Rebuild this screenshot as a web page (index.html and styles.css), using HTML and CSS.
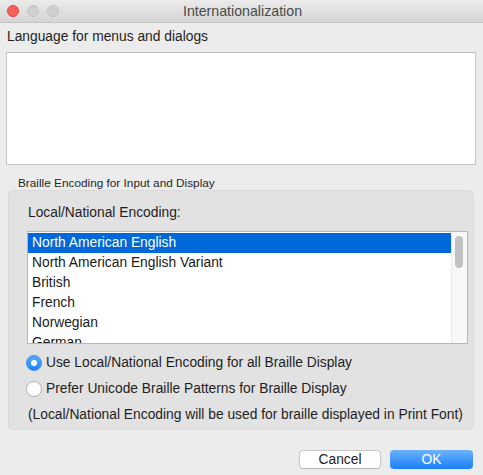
FILE: index.html
```html
<!DOCTYPE html>
<html>
<head>
<meta charset="utf-8">
<link rel="stylesheet" href="styles.css">
</head>
<body>
<div class="window">
  <div class="titlebar">
    <div class="lights">
      <span class="light red"></span>
      <span class="light gray"></span>
      <span class="light gray"></span>
    </div>
    <div class="title">Internationalization</div>
  </div>
  <div class="content">
    <div class="lang-label">Language for menus and dialogs</div>
    <div class="lang-box"></div>
    <div class="group-label">Braille Encoding for Input and Display</div>
    <div class="group">
      <div class="enc-label">Local/National Encoding:</div>
      <div class="list">
        <div class="rows">
          <div class="row selected">North American English</div>
          <div class="row">North American English Variant</div>
          <div class="row">British</div>
          <div class="row">French</div>
          <div class="row">Norwegian</div>
          <div class="row">German</div>
        </div>
        <div class="scroll"><div class="thumb"></div></div>
      </div>
      <div class="radio-row"><span class="radio on"></span><span>Use Local/National Encoding for all Braille Display</span></div>
      <div class="radio-row"><span class="radio"></span><span>Prefer Unicode Braille Patterns for Braille Display</span></div>
      <div class="note">(Local/National Encoding will be used for braille displayed in Print Font)</div>
    </div>
    <div class="buttons">
      <div class="btn cancel">Cancel</div>
      <div class="btn ok">OK</div>
    </div>
  </div>
</div>
</body>
</html>
```
FILE: styles.css
```css
html, body {
  margin: 0;
  padding: 0;
}
body {
  width: 483px;
  height: 475px;
  overflow: hidden;
  background: #ececec;
  font-family: "Liberation Sans", Arial, sans-serif;
  font-size: 13.8px;
  color: #1e1e1e;
}
.window {
  width: 483px;
  height: 475px;
  display: flex;
  flex-direction: column;
}
.titlebar {
  height: 22px;
  border-bottom: 1px solid #c4c4c4;
  background: linear-gradient(#ebebeb, #d5d5d5);
  display: flex;
  align-items: center;
  position: relative;
}
.lights {
  display: flex;
  gap: 8px;
  padding-left: 7px;
  position: relative;
  z-index: 1;
}
.light {
  width: 12px;
  height: 12px;
  border-radius: 50%;
  box-sizing: border-box;
}
.light.red {
  background: #fc5f57;
  border: 1px solid #e2463f;
}
.light.gray {
  background: #d0d0d0;
  border: 1px solid #c2c2c2;
}
.title {
  position: absolute;
  left: 0;
  right: 0;
  top: 0;
  line-height: 22px;
  text-align: center;
  color: #4a4a4a;
  font-size: 14.2px;
  padding-left: 2px;
}
.content {
  display: flex;
  flex-direction: column;
}
.lang-label {
  padding: 6px 0 0 7px;
  height: 16px;
  line-height: 16px;
}
.lang-box {
  margin: 7px 0 0 6px;
  width: 468px;
  height: 111px;
  background: #fff;
  border: 1px solid #c6c6c6;
  border-top-color: #bcbcbc;
}
.group-label {
  font-size: 11.8px;
  padding: 11px 0 0 18px;
  height: 14px;
  line-height: 14px;
  color: #262626;
}
.group {
  margin: 0 0 0 8px;
  width: 464px;
  height: 238px;
  background: #e2e2e2;
  border: 1px solid #dadada;
  border-radius: 5px;
  display: flex;
  flex-direction: column;
}
.enc-label {
  padding: 14px 0 0 19px;
  height: 16px;
  line-height: 16px;
}
.list {
  margin: 10px 0 0 18px;
  width: 439px;
  height: 111px;
  border: 1px solid #b7b7b7;
  background: #fff;
  display: flex;
  overflow: hidden;
}
.rows {
  flex: 1;
  padding-top: 1px;
}
.row {
  height: 20px;
  line-height: 20px;
  padding-left: 4px;
  color: #1a1a1a;
}
.row.selected {
  background: #0068d8;
  color: #fff;
}
.scroll {
  width: 15px;
  border-left: 1px solid #ebebeb;
  background: #f8f8f8;
  position: relative;
}
.thumb {
  margin: 4px 0 0 3px;
  width: 8px;
  height: 32px;
  border-radius: 4px;
  background: #c2c2c2;
}
.radio-row {
  display: flex;
  align-items: center;
  gap: 4px;
  height: 20px;
  padding-left: 17px;
  margin-top: 6px;
  line-height: 20px;
}
.list + .radio-row {
  margin-top: 9px;
}
.radio {
  width: 16px;
  height: 16px;
  border-radius: 50%;
  box-sizing: border-box;
  background: #fff;
  border: 1px solid #b3b3b3;
  position: relative;
}
.radio.on {
  background: linear-gradient(#5eaaff, #1b83fb);
  border: 1px solid #3c8ef3;
}
.radio.on::after {
  content: "";
  position: absolute;
  left: 4px;
  top: 4px;
  width: 6px;
  height: 6px;
  border-radius: 50%;
  background: #fff;
}
.note {
  padding: 6px 0 0 19px;
  height: 20px;
  line-height: 20px;
}
.buttons {
  display: flex;
  justify-content: flex-end;
  gap: 9px;
  margin-top: 20px;
  padding-right: 10px;
}
.btn {
  width: 82px;
  height: 19px;
  line-height: 19px;
  text-align: center;
  border-radius: 4px;
  box-sizing: border-box;
}
.btn.cancel {
  background: #fff;
  border: 1px solid #c8c8c8;
  border-bottom-color: #b5b5b5;
  line-height: 17px;
  color: #1e1e1e;
}
.btn.ok {
  width: 83px;
  background: linear-gradient(#6cb3fa, #1a7ffb);
  color: #fff;
}
```
